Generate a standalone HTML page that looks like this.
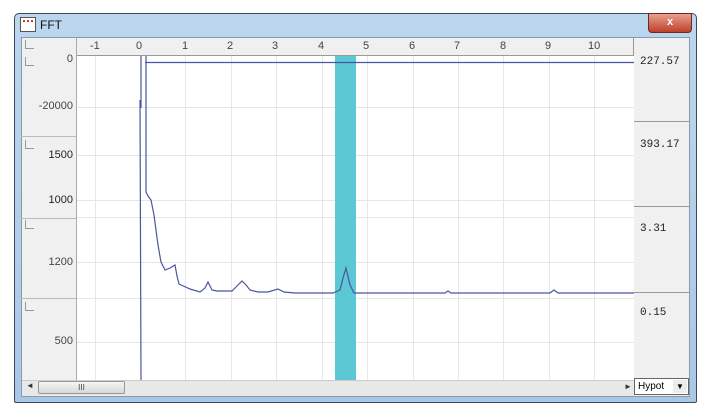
<!DOCTYPE html>
<html><head><meta charset="utf-8"><style>
body{margin:0;width:709px;height:415px;background:#fff;position:relative;overflow:hidden;font-family:"Liberation Sans",sans-serif}
.a{position:absolute}
.lbl{font-size:11px;color:#444}
.mono{font-family:"Liberation Mono",monospace;font-size:11px;color:#222}
</style></head><body>
<div class="a" style="left:14px;top:13px;width:683px;height:390px;background:linear-gradient(#bcd6ee,#a9c8e6);border:1px solid #3a4a5c;border-radius:5px 5px 2px 2px;box-sizing:border-box"></div>
<div class="a" style="left:20px;top:17px;width:14px;height:13px;border:1px solid #555;background:#fff"><div style="margin:2px;height:4px;border-top:2px dotted #d33"></div></div>
<div class="a" style="left:40px;top:18px;font-size:12px;color:#111">FFT</div>
<div class="a" style="left:648px;top:13px;width:42px;height:18px;background:linear-gradient(#e8a090,#c0402c);border:1px solid #6a2a20;border-radius:0 0 4px 4px;color:#fff;font-size:11px;font-weight:bold;text-align:center;line-height:16px">x</div>
<div class="a" style="left:21px;top:37px;width:669px;height:360px;background:#f0f0f0;border:1px solid #8a9aaa;box-sizing:border-box"></div>
<!-- top axis -->
<div class="a" style="left:76px;top:38px;width:558px;height:18px;border-bottom:1px solid #999;border-right:1px solid #999;box-sizing:border-box;background:#f0f0f0"></div>
<div class="a" style="left:76px;top:38px;width:1px;height:342px;background:#aaa"></div>
<div class="a" style="left:25px;top:40px;width:8px;height:8px;border-left:1px solid #999;border-bottom:1px solid #999"></div>
<div class="a" style="left:25px;top:57px;width:8px;height:8px;border-left:1px solid #999;border-bottom:1px solid #999"></div>
<div class="a" style="left:25px;top:140px;width:8px;height:8px;border-left:1px solid #999;border-bottom:1px solid #999"></div>
<div class="a" style="left:25px;top:220px;width:8px;height:8px;border-left:1px solid #999;border-bottom:1px solid #999"></div>
<div class="a" style="left:25px;top:302px;width:8px;height:8px;border-left:1px solid #999;border-bottom:1px solid #999"></div>
<div class="a" style="left:21px;top:136px;width:55px;height:1px;background:#bbb"></div>
<div class="a" style="left:21px;top:218px;width:55px;height:1px;background:#bbb"></div>
<div class="a" style="left:21px;top:298px;width:55px;height:1px;background:#bbb"></div>
<!-- plot -->
<div class="a" style="left:77px;top:56px;width:557px;height:324px;background:#fff"></div>
<svg class="a" style="left:0;top:0" width="709" height="415">
<g stroke="#e6e6e6" stroke-width="1">
<line x1="95.5" y1="56" x2="95.5" y2="380"/><line x1="185.5" y1="56" x2="185.5" y2="380"/><line x1="231.5" y1="56" x2="231.5" y2="380"/><line x1="276.5" y1="56" x2="276.5" y2="380"/><line x1="322.5" y1="56" x2="322.5" y2="380"/><line x1="367.5" y1="56" x2="367.5" y2="380"/><line x1="413.5" y1="56" x2="413.5" y2="380"/><line x1="458.5" y1="56" x2="458.5" y2="380"/><line x1="503.5" y1="56" x2="503.5" y2="380"/><line x1="549.5" y1="56" x2="549.5" y2="380"/><line x1="594.5" y1="56" x2="594.5" y2="380"/>
<line x1="77" y1="107.5" x2="634" y2="107.5"/><line x1="77" y1="155.5" x2="634" y2="155.5"/><line x1="77" y1="200.5" x2="634" y2="200.5"/><line x1="77" y1="217.5" x2="634" y2="217.5"/><line x1="77" y1="262.5" x2="634" y2="262.5"/><line x1="77" y1="298.5" x2="634" y2="298.5"/><line x1="77" y1="342.5" x2="634" y2="342.5"/>
</g>
<rect x="335" y="56" width="21" height="324" fill="#5bc8d4"/>
<g fill="none" stroke="#4a56a0" stroke-width="1.2">
<line x1="145" y1="62.5" x2="634" y2="62.5"/>
<polyline points="141,56 141,108 140,100 141,380"/>
<polyline points="146,56 146,192 148,196 151,200 154,215 158,245 161,262 165,270 170,268 175,265 177,276 179,284 190,289 200,292 205,288 208,282 212,290 217,291 232,291 238,285 242,281 246,285 250,290 258,292 268,292 278,289 284,292 295,293 333,293 340,290 343,278 346,268 350,285 354,293 445,293 448,291 451,293 550,293 554,290 558,293 634,293"/>
</g>
</svg>
<!-- x labels -->
<div class="a lbl" style="left:90px;top:40px">-1</div>
<div class="a lbl" style="left:136px;top:40px">0</div>
<div class="a lbl" style="left:182px;top:40px">1</div>
<div class="a lbl" style="left:227px;top:40px">2</div>
<div class="a lbl" style="left:272px;top:40px">3</div>
<div class="a lbl" style="left:318px;top:40px">4</div>
<div class="a lbl" style="left:363px;top:40px">5</div>
<div class="a lbl" style="left:409px;top:40px">6</div>
<div class="a lbl" style="left:454px;top:40px">7</div>
<div class="a lbl" style="left:500px;top:40px">8</div>
<div class="a lbl" style="left:545px;top:40px">9</div>
<div class="a lbl" style="left:588px;top:40px">10</div>
<!-- y labels -->
<div class="a lbl" style="right:636px;top:53px">0</div>
<div class="a lbl" style="right:636px;top:100px">-20000</div>
<div class="a lbl" style="right:636px;top:149px;color:#222">1500</div>
<div class="a lbl" style="right:636px;top:194px;color:#222">1000</div>
<div class="a lbl" style="right:636px;top:256px">1200</div>
<div class="a lbl" style="right:636px;top:335px">500</div>
<!-- right panel -->
<div class="a" style="left:634px;top:121px;width:56px;height:1px;background:#999"></div>
<div class="a" style="left:634px;top:206px;width:56px;height:1px;background:#999"></div>
<div class="a" style="left:634px;top:292px;width:56px;height:1px;background:#999"></div>
<div class="a mono" style="left:640px;top:56px">227.57</div>
<div class="a mono" style="left:640px;top:139px">393.17</div>
<div class="a mono" style="left:640px;top:223px">3.31</div>
<div class="a mono" style="left:640px;top:307px">0.15</div>
<!-- scrollbar -->
<div class="a" style="left:22px;top:380px;width:612px;height:16px;background:#e8e8e8;border-top:1px solid #ccc;box-sizing:border-box"></div>
<div class="a" style="left:26px;top:381px;font-size:8px;color:#333">◄</div>
<div class="a" style="left:38px;top:381px;width:87px;height:13px;background:linear-gradient(#f4f4f4,#d8d8d8);border:1px solid #999;border-radius:2px;box-sizing:border-box;text-align:center;font-size:8px;line-height:11px;color:#444">III</div>
<div class="a" style="left:624px;top:382px;font-size:8px;color:#333">►</div>
<div class="a" style="left:634px;top:378px;width:55px;height:17px;background:#fff;border:1px solid #666;box-sizing:border-box;font-size:10px;line-height:15px;padding-left:3px">Hypot</div>
<div class="a" style="left:673px;top:380px;width:14px;height:13px;background:#ececec;font-size:8px;text-align:center;line-height:13px">▼</div>
</body></html>
